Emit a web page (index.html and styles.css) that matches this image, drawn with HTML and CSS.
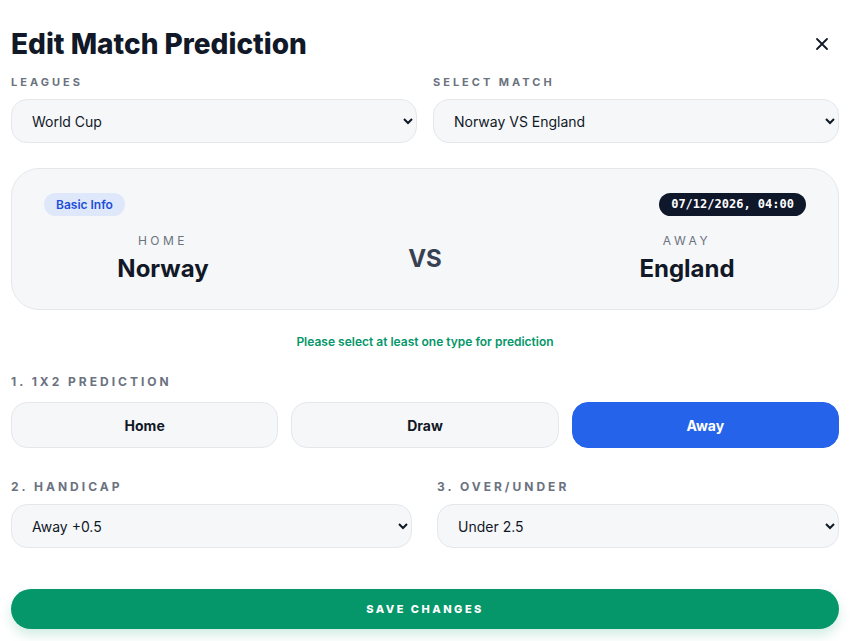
FILE: index.html
```html
<!DOCTYPE html>
<html>
  <head>
    <link rel="stylesheet" href="styles.css">
  </head>
  <body>
    <div class="modal">
      <div class="modal-head">
        <h1 class="title">Edit Match Prediction</h1>
        <button class="close" aria-label="Close">
          <svg width="14" height="14" viewBox="0 0 14 14"><path d="M2 2L12 12M12 2L2 12" stroke="#111827" stroke-width="1.8" stroke-linecap="round"/></svg>
        </button>
      </div>

      <div class="row two">
        <div class="field">
          <label class="label">Leagues</label>
          <select class="select"><option>World Cup</option></select>
        </div>
        <div class="field">
          <label class="label">Select Match</label>
          <select class="select"><option>Norway VS England</option></select>
        </div>
      </div>

      <div class="match-card">
        <div class="card-top">
          <span class="badge">Basic Info</span>
          <span class="date">07/12/2026, 04:00</span>
        </div>
        <div class="teams">
          <div class="team">
            <div class="side">Home</div>
            <div class="name">Norway</div>
          </div>
          <div class="vs">VS</div>
          <div class="team">
            <div class="side">Away</div>
            <div class="name">England</div>
          </div>
        </div>
      </div>

      <p class="hint">Please select at least one type for prediction</p>

      <div class="section">
        <label class="label step">1. 1X2 Prediction</label>
        <div class="choices">
          <button class="choice">Home</button>
          <button class="choice">Draw</button>
          <button class="choice active">Away</button>
        </div>
      </div>

      <div class="row two wide">
        <div class="field">
          <label class="label step">2. Handicap</label>
          <select class="select"><option>Away +0.5</option></select>
        </div>
        <div class="field">
          <label class="label step">3. Over/Under</label>
          <select class="select"><option>Under 2.5</option></select>
        </div>
      </div>

      <button class="save">Save Changes</button>
    </div>
  </body>
</html>
```

FILE: styles.css
```css
body {margin: 0; background: #fff; font-family: Inter, "Noto Sans", sans-serif; color: #111827}

.modal {padding: 26px 11px 12px 11px}

.modal-head {display: flex; align-items: center; justify-content: space-between; margin-bottom: 12px}
.title {margin: 0; font-size: 28px; line-height: 36px; font-weight: 800; letter-spacing: 0; color: #111827}
.close {background: none; border: none; padding: 4px; margin-right: 6px; display: flex; cursor: pointer}

.row.two {display: grid; grid-template-columns: 1fr 1fr; gap: 16px}
.row.two.wide {grid-template-columns: 401px 1fr; gap: 25px; margin-top: 31px}
.field {display: flex; flex-direction: column}

.label {display: block; font-size: 11px; line-height: 16px; font-weight: 700; letter-spacing: 3px; text-transform: uppercase; color: #6b7280; margin-bottom: 9px}
.label.step {font-size: 12px; letter-spacing: 3px}

.select {height: 44px; padding: 0 6px 0 16px; border: 1px solid #e5e7eb; border-radius: 16px; background-color: #f6f7f9; font-family: Inter, sans-serif; font-size: 14px; color: #111827}

.match-card {margin-top: 25px; border: 1px solid #e5e7eb; border-radius: 28px; background: #f6f7f9; padding: 24px 32px 25px 32px}
.card-top {display: flex; justify-content: space-between; align-items: center}
.badge {background: #dfe7fa; color: #1d4ed8; font-size: 12px; line-height: 23px; font-weight: 600; padding: 0 12px; border-radius: 12px}
.date {background: #0f172a; color: #fff; font-family: "DejaVu Sans Mono", monospace; font-size: 12px; line-height: 23px; font-weight: 700; padding: 0 12px; border-radius: 12px}

.teams {display: grid; grid-template-columns: 238px 1fr 238px; align-items: center; margin-top: 17px}
.team {text-align: center}
.side {font-size: 12px; line-height: 16px; letter-spacing: 3.5px; text-transform: uppercase; color: #6b7280; margin-bottom: 5px}
.name {font-size: 24px; line-height: 30px; font-weight: 700; color: #111827}
.vs {text-align: center; font-size: 24px; font-weight: 700; color: #374151}

.hint {margin: 24px 0 0 0; text-align: center; font-size: 12px; line-height: 16px; font-weight: 600; color: #059669}

.section {margin-top: 24px}
.choices {display: grid; grid-template-columns: 1fr 1fr 1fr; gap: 13px; margin-top: 12px}
.choice {height: 46px; border: 1px solid #e5e7eb; border-radius: 16px; background: #f6f7f9; font-family: Inter, sans-serif; font-size: 14px; font-weight: 700; color: #111827; cursor: pointer}
.choice.active {background: #2563eb; border-color: #2563eb; color: #fff}

.save {display: block; width: 100%; margin-top: 41px; height: 40px; border: none; border-radius: 20px; background: #059669; color: #fff; font-family: Inter, sans-serif; font-size: 11px; font-weight: 800; letter-spacing: 2.5px; text-transform: uppercase; box-shadow: 0 6px 12px rgba(5, 150, 105, 0.18)}
```
